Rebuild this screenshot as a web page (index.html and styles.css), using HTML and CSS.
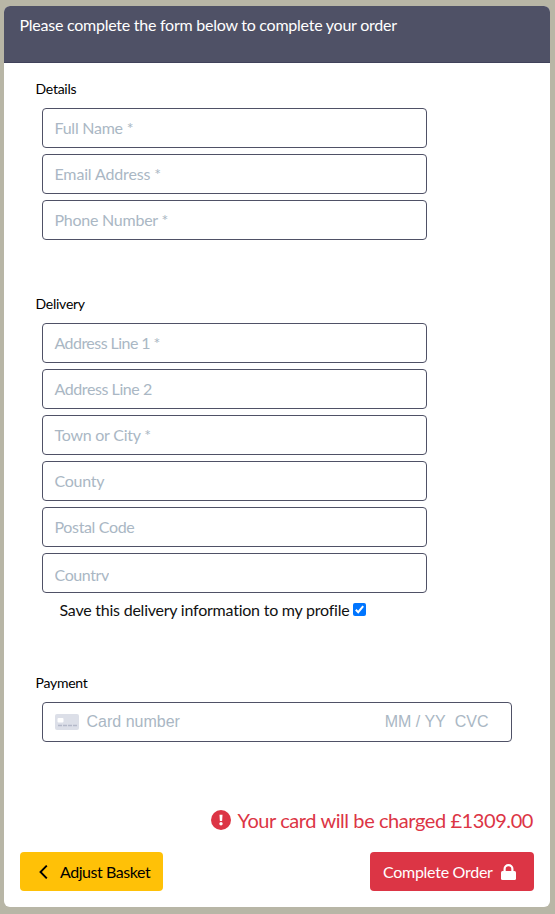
FILE: index.html
```html
<!DOCTYPE html>
<html lang="en">
<head>
<meta charset="utf-8">
<title>Checkout</title>
<link rel="stylesheet" href="styles.css">
</head>
<body>
<main class="card">
  <header class="card-header"><span class="heading">Please complete the form below to complete your order</span></header>
  <form class="checkout">
    <section class="group">
      <h2 class="legend">Details</h2>
      <div class="fields">
        <div class="field"><span>Full Name *</span></div>
        <div class="field"><span class="email">Email Address *</span></div>
        <div class="field"><span>Phone Number *</span></div>
      </div>
    </section>
    <section class="group delivery">
      <h2 class="legend">Delivery</h2>
      <div class="fields">
        <div class="field"><span class="line-one">Address Line 1 *</span></div>
        <div class="field"><span class="line-two">Address Line 2</span></div>
        <div class="field"><span>Town or City *</span></div>
        <div class="field"><span>County</span></div>
        <div class="field"><span class="postcode">Postal Code</span></div>
        <div class="field country"><span>Country</span></div>
      </div>
      <div class="save"><span>Save this delivery information to my profile</span>
        <svg class="check" viewBox="0 0 13 13"><rect width="13" height="13" rx="2" fill="#0075ff"/><path d="M2.8 6.8 5.2 9.2 10.2 3.2" fill="none" stroke="#fff" stroke-width="2"/></svg>
      </div>
    </section>
    <section class="group payment">
      <h2 class="legend">Payment</h2>
      <div class="field card-field">
        <svg class="card-icon" viewBox="0 0 24 16"><rect width="24" height="16" rx="2" fill="#dcdfe8"/><rect x="2.5" y="4" width="6" height="4.5" rx="1" fill="#fff"/><path d="M3 11.5H22" stroke="#b4b9c9" stroke-width="1.6" stroke-dasharray="4 1"/></svg>
        <span class="number">Card number</span><span class="expiry">MM / YY</span><span class="cvc">CVC</span>
      </div>
    </section>
    <p class="charge">
      <svg class="alert" viewBox="0 0 20 20"><circle cx="10" cy="10" r="10" fill="#dc3545"/><path d="M8.5 4.7h3l-.4 6.3H8.9z" fill="#fff"/><circle cx="10" cy="13.7" r="1.7" fill="#fff"/></svg>
      <span>Your card will be charged £1309.00</span>
    </p>
    <div class="actions">
      <div class="button adjust"><svg class="chevron" viewBox="0 0 9 14"><path d="M7.8 .6 1.5 7l6.3 6.4" fill="none" stroke="#000" stroke-width="1.9"/></svg><span>Adjust Basket</span></div>
      <div class="button complete"><span>Complete Order</span><svg class="lock" viewBox="0 0 15 16"><rect y="7" width="15" height="9" rx="1.5" fill="#fff"/><path d="M3.6 8V5a3.9 3.9 0 0 1 7.8 0v3" fill="none" stroke="#fff" stroke-width="2.2"/></svg></div>
    </div>
  </form>
</main>
</body>
</html>
```
FILE: styles.css
```css
* { box-sizing: border-box; }
body { margin: 0; padding: 6px 5px 7px 4px; height: 914px; background: #b8b6a6; font: 16px/24px Lato, sans-serif; letter-spacing: -.25px; color: #111; white-space: nowrap; }
.card { height: 901px; background: #fff; border-radius: 6px; overflow: hidden; }
.card-header { height: 57px; padding: 7px 15.5px; background: #4f5166; border-bottom: 1px solid #40425a; color: #fff; }
.checkout { padding: 0 16px; }
.group { padding: 15px 22px 0; }
.legend { margin: 0 0 8px -6.5px; font-size: 14px; font-weight: 400; line-height: 22px; color: #000; }
.fields { display: grid; gap: 6px; width: 385px; }
.field { display: flex; align-items: center; height: 40px; padding: 0 11.5px; border: 1px solid #4f5166; border-radius: 4px; color: #aab7c4; }
.email { letter-spacing: -.15px; }
.line-one { letter-spacing: -.55px; }
.line-two { letter-spacing: -.42px; }
.postcode { letter-spacing: -.35px; }
.country span { height: 17px; line-height: 22px; margin-top: -1px; letter-spacing: -.4px; overflow: hidden; }
.delivery { padding-top: 53px; }
.save { display: flex; align-items: center; gap: 4px; height: 24px; margin: 5px 0 0 17.5px; letter-spacing: -.23px; }
.check { width: 13px; height: 13px; margin-top: -1px; }
.payment { padding-top: 50px; }
.card-field { width: 470px; font-family: "Liberation Sans", sans-serif; letter-spacing: 0; }
.card-icon { width: 24px; height: 16px; margin-right: 8px; }
.expiry { margin-left: auto; }
.cvc { margin: 0 11px 0 9px; }
.charge { display: flex; justify-content: flex-end; align-items: center; gap: 7px; height: 30px; margin: 63px 1px 17px 0; font-size: 20px; letter-spacing: -.42px; color: #dc3545; }
.alert { width: 20px; height: 20px; }
.actions { display: flex; justify-content: space-between; }
.button { display: flex; align-items: center; height: 39px; border-radius: 4px; }
.adjust { width: 143px; padding-left: 19px; gap: 12px; letter-spacing: -.45px; background: #ffc107; color: #000; }
.chevron { width: 9px; height: 14px; }
.complete { width: 164px; padding-left: 13px; gap: 8px; letter-spacing: -.28px; background: #dc3545; color: #fff; }
.lock { width: 15px; height: 16px; }
```
